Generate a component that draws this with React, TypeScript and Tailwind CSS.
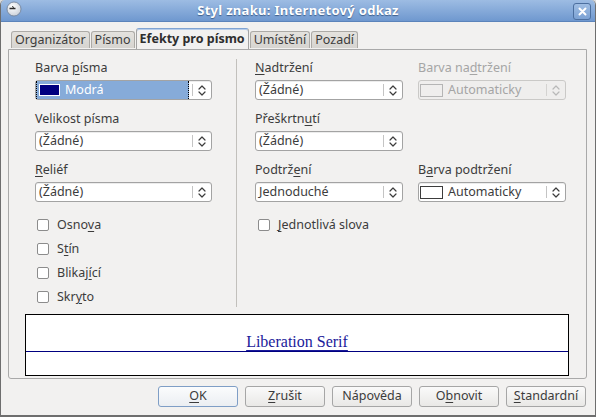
import React from 'react';

// Accelerator-key label: underlines the character at index `at`
function Mn({ text, at }: { text: string; at?: number }) {
  if (at === undefined) return <>{text}</>;
  return (
    <>
      {text.slice(0, at)}
      <span className="underline decoration-1 underline-offset-[2px]">{text[at]}</span>
      {text.slice(at + 1)}
    </>
  );
}

function Chevrons({ disabled }: { disabled?: boolean }) {
  return (
    <svg width="8" height="13" viewBox="0 0 8 13" fill="none">
      <path
        d="M1 5 L4 2 L7 5 M1 8 L4 11 L7 8"
        stroke={disabled ? '#b8b8b8' : '#3c3c3c'}
        strokeWidth="1.2"
        strokeLinecap="round"
        strokeLinejoin="round"
      />
    </svg>
  );
}

function Swatch({ fill, disabled }: { fill?: boolean; disabled?: boolean }) {
  if (fill) {
    return <span className="mr-[5px] h-[12px] w-[21px] shrink-0 border border-white bg-[#000080] outline outline-1 outline-[#86abd9]" />;
  }
  return (
    <span
      className={`mr-[5px] h-[13px] w-[23px] shrink-0 border ${
        disabled ? 'border-[#b5b5b5] bg-[#efeeed]' : 'border-[#3c3c3c] bg-white'
      }`}
    />
  );
}

interface ListBoxProps {
  width: string;
  value: string;
  swatch?: 'blue' | 'empty';
  focused?: boolean;
  disabled?: boolean;
}

function ListBox({ width, value, swatch, focused, disabled }: ListBoxProps) {
  return (
    <div
      className={`flex h-[20px] ${width} rounded-[3px] border ${
        disabled
          ? 'border-[#cac9c7] bg-[#efeeed] text-[#a5a5a5]'
          : 'border-[#a3a3a3] bg-white text-[#3c3c3c] shadow-[inset_0_1px_0_#ececec]'
      }`}
    >
      <div
        className={`flex min-w-0 flex-1 items-center overflow-hidden ${
          focused
            ? 'mr-[3px] border-x border-dotted border-black bg-[#86abd9] pl-[2px] text-white'
            : swatch
              ? 'pl-[1px]'
              : 'pl-[3px]'
        }`}
      >
        {swatch && <Swatch fill={swatch === 'blue'} disabled={disabled} />}
        <span className="whitespace-nowrap leading-[18px]">{value}</span>
      </div>
      <div className={`my-[3px] w-px ${disabled ? 'bg-[#d4d3d1]' : 'bg-[#c4c4c4]'}`} />
      <div className="flex w-[18px] items-center justify-center">
        <Chevrons disabled={disabled} />
      </div>
    </div>
  );
}

function Field({
  label,
  at,
  disabled,
  children,
}: {
  label: string;
  at?: number;
  disabled?: boolean;
  children: React.ReactNode;
}) {
  return (
    <div className="flex flex-col">
      <div className={`h-[17px] whitespace-nowrap leading-[17px] ${disabled ? 'text-[#a5a5a5]' : ''}`}>
        <Mn text={label} at={at} />
      </div>
      <div className="mt-[4px]">{children}</div>
    </div>
  );
}

function Check({ label, at }: { label: string; at?: number }) {
  return (
    <div className="flex h-[24px] items-center pl-[2px]">
      <span className="h-[12px] w-[12px] shrink-0 rounded-[2px] border border-[#8c8c8c] bg-white" />
      <span className="ml-[8px] whitespace-nowrap leading-[18px]">
        <Mn text={label} at={at} />
      </span>
    </div>
  );
}

function Tab({ label, active }: { label: string; active?: boolean }) {
  if (active) {
    return (
      <div className="relative z-10 -mb-px flex h-[21px] items-center whitespace-nowrap rounded-t-[3px] border border-b-0 border-[#a3a3a3] border-t-[#7fa3d3] bg-[#f2f1f0] px-[3px] font-bold text-[#2e2e2e] shadow-[inset_0_1px_0_#b7cdea]">
        {label}
      </div>
    );
  }
  return (
    <div className="mt-[3px] flex h-[17px] items-center whitespace-nowrap rounded-t-[3px] border border-b-0 border-[#acaaa6] bg-gradient-to-b from-[#e4e2de] to-[#d6d4d0] px-[3px] text-[#3c3c3c]">
      {label}
    </div>
  );
}

function Btn({ label, at, primary }: { label: string; at?: number; primary?: boolean }) {
  return (
    <div
      className={`flex h-[21px] w-[80px] items-center justify-center rounded-[3px] border bg-gradient-to-b ${
        primary
          ? 'border-[#7f9ec6] from-[#fbfcfd] to-[#ebeef2]'
          : 'border-[#a6a6a6] from-[#fafafa] to-[#e9e8e6]'
      }`}
    >
      <Mn text={label} at={at} />
    </div>
  );
}

export default function App() {
  return (
    <div className="h-[417px] w-[596px] overflow-hidden bg-[#dcdcdc] font-['Noto_Sans',sans-serif] text-[12.5px] text-[#3c3c3c]">
      <div className="flex h-full flex-col overflow-hidden rounded-t-[5px] border-x border-b-2 border-[#6e6e6e] border-t-0 bg-[#f2f1f0]">
        {/* Title bar */}
        <div className="relative flex h-[22px] shrink-0 items-center justify-center border-b border-[#5c84bb] bg-gradient-to-b from-[#9dbce3] to-[#6f98cf]">
          <svg className="absolute left-[5px] top-[1px]" width="16" height="16" viewBox="0 0 16 16">
            <defs>
              <radialGradient id="ball" cx="0.4" cy="0.35" r="0.7">
                <stop offset="0" stopColor="#ffffff" />
                <stop offset="1" stopColor="#c9cfd8" />
              </radialGradient>
            </defs>
            <circle cx="8" cy="8" r="7" fill="url(#ball)" stroke="#6f7f95" strokeWidth="0.8" />
            <path d="M3.5 7.5 H9.5" stroke="#2a2a2a" strokeWidth="1.4" />
            <path d="M6 5.5 L8 6.5" stroke="#2a2a2a" strokeWidth="1" />
          </svg>
          <span className="text-[13px] font-bold tracking-[0.3px] text-white [text-shadow:0_1px_1px_#3f5f8c]">
            Styl znaku: Internetový odkaz
          </span>
          <div className="absolute right-[4px] top-[3px] flex h-[17px] w-[18px] items-center justify-center rounded-[3px] border border-[#4c6f9f] bg-gradient-to-b from-[#9fbde3] to-[#7ca2d4]">
            <svg width="9" height="9" viewBox="0 0 9 9">
              <path d="M1.5 1.5 L7.5 7.5 M7.5 1.5 L1.5 7.5" stroke="#ffffff" strokeWidth="2" strokeLinecap="round" />
            </svg>
          </div>
        </div>

        {/* Body */}
        <div className="flex flex-1 flex-col pl-[7px] pr-[8px] pt-[6px]">
          <div className="ml-[3px] flex h-[21px] items-start gap-px">
            <Tab label="Organizátor" />
            <Tab label="Písmo" />
            <Tab label="Efekty pro písmo" active />
            <Tab label="Umístění" />
            <Tab label="Pozadí" />
          </div>

          <div className="flex flex-col rounded-b-[3px] border border-[#a9a9a9] pb-[2px] pt-[9px]">
            <div className="flex">
              {/* Left column */}
              <div className="ml-[26px] flex w-[177px] flex-col">
                <div className="flex flex-col gap-[10px]">
                  <Field label="Barva písma" at={6}>
                    <ListBox width="w-[177px]" value="Modrá" swatch="blue" focused />
                  </Field>
                  <Field label="Velikost písma">
                    <ListBox width="w-[177px]" value="(Žádné)" />
                  </Field>
                  <Field label="Reliéf" at={0}>
                    <ListBox width="w-[177px]" value="(Žádné)" />
                  </Field>
                </div>
                <div className="mt-[11px] flex flex-col">
                  <Check label="Osnova" at={4} />
                  <Check label="Stín" at={1} />
                  <Check label="Blikající" at={6} />
                  <Check label="Skryto" at={3} />
                </div>
              </div>

              {/* Separator */}
              <div className="mb-[2px] ml-[24px] w-px bg-[#c2c0bc]" />

              {/* Right column */}
              <div className="ml-[18px] flex flex-col">
                <div className="flex flex-col gap-[10px]">
                  <div className="flex gap-[15px]">
                    <Field label="Nadtržení" at={0}>
                      <ListBox width="w-[148px]" value="(Žádné)" />
                    </Field>
                    <Field label="Barva nadtržení" at={8} disabled>
                      <ListBox width="w-[148px]" value="Automaticky" swatch="empty" disabled />
                    </Field>
                  </div>
                  <div className="flex gap-[15px]">
                    <Field label="Přeškrtnutí" at={8}>
                      <ListBox width="w-[148px]" value="(Žádné)" />
                    </Field>
                  </div>
                  <div className="flex gap-[15px]">
                    <Field label="Podtržení" at={6}>
                      <ListBox width="w-[148px]" value="Jednoduché" />
                    </Field>
                    <Field label="Barva podtržení" at={1}>
                      <ListBox width="w-[148px]" value="Automaticky" swatch="empty" />
                    </Field>
                  </div>
                </div>
                <div className="mt-[11px] pl-[1px]">
                  <Check label="Jednotlivá slova" at={0} />
                </div>
              </div>
            </div>

            {/* Preview */}
            <div className="ml-[16px] mt-[5px] flex h-[62px] w-[544px] flex-col border border-black bg-white">
              <div className="flex h-[35px] items-end justify-center">
                <span className="font-['Liberation_Serif',serif] text-[16px] leading-none text-[#1a1a9a] underline decoration-1 underline-offset-[3px]">
                  Liberation Serif
                </span>
              </div>
              <div className="mt-[1px] h-px bg-[#000080]" />
            </div>
          </div>

          {/* Buttons */}
          <div className="mt-[7px] flex justify-end gap-[7px] pr-[1px]">
            <Btn label="OK" at={0} primary />
            <Btn label="Zrušit" at={0} />
            <Btn label="Nápověda" />
            <Btn label="Obnovit" at={1} />
            <Btn label="Standardní" at={0} />
          </div>
        </div>
      </div>
    </div>
  );
}
